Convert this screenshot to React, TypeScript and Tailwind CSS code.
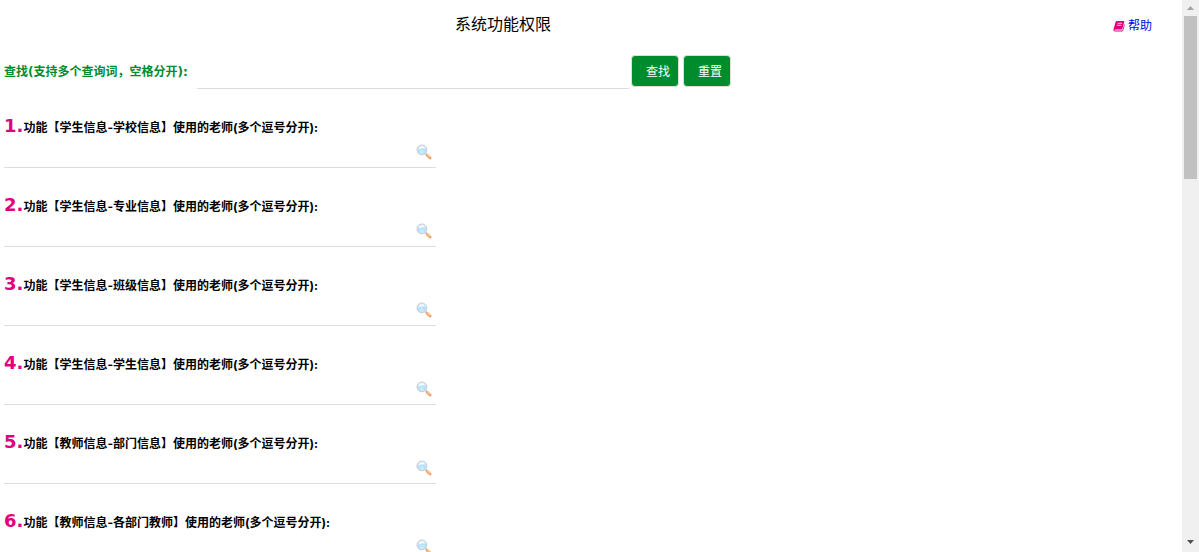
import React from "react";

const features = [
  "学生信息-学校信息",
  "学生信息-专业信息",
  "学生信息-班级信息",
  "学生信息-学生信息",
  "教师信息-部门信息",
  "教师信息-各部门教师",
];

function MagnifierIcon() {
  return (
    <svg width="16" height="16" viewBox="0 0 16 16" aria-hidden="true">
      <defs>
        <radialGradient id="lens" cx="0.5" cy="0.75" r="0.75">
          <stop offset="0" stopColor="#c9f0ff" />
          <stop offset="0.5" stopColor="#b6defa" />
          <stop offset="1" stopColor="#e9f5fd" />
        </radialGradient>
      </defs>
      <path d="M9.600 9.600l1.800 1.500" stroke="#b9b4b4" strokeWidth="1.600" />
      <path d="M11.200 11.200l2.900 2.700" stroke="#ea9a63" strokeWidth="2.800" strokeLinecap="round" />
      <path d="M11.300 10.900l2.500 2.200" stroke="#ffd79c" strokeWidth="1.200" strokeLinecap="round" />
      <circle cx="5.900" cy="5.900" r="4.900" fill="url(#lens)" stroke="#c9cbd0" strokeWidth="1" />
      <path d="M2.600 5.500a3.400 3.400 0 0 1 6.400-1.300c-2 0-4.400 0-6.400 1.300z" fill="#f6fbff" />
    </svg>
  );
}

function BookIcon() {
  return (
    <svg width="12" height="12" viewBox="0 0 12 12" aria-hidden="true">
      <path
        d="M4 1h6.600q.9 0 .7.800L9.400 8.600Q9.200 9.400 8.400 9.400H2.200q-.7 0-.7.500t.7.500h6.600q.5 0 .7-.5L11.300 4q.6.300.4 1L10.200 10.400q-.3 1-1.300 1H2.100Q.4 11.400.4 9.800L2.500 2.300Q2.900 1 4 1z"
        fill="#e0007f"
      />
      <path d="M4.600 3.300h4.400M4 5.300h4.400" stroke="#fff" strokeWidth="0.8" />
    </svg>
  );
}

interface FeatureFieldProps {
  index: number;
  name: string;
}

function FeatureField({ index, name }: FeatureFieldProps) {
  const id = `feature-${index}`;
  return (
    <div className="pt-[27px]">
      <label
        htmlFor={id}
        className="flex h-5 items-baseline font-['Inter','Noto_Sans_CJK_SC',sans-serif] text-xs leading-5 font-bold text-black"
      >
        <span className="font-['DejaVu_Sans',sans-serif] text-lg leading-5 text-[#e0007f]">{index}.</span>
        <span>功能【{name}】使用的老师(多个逗号分开):</span>
      </label>
      <div className="flex h-8 w-[432px] max-w-full border-b border-[#dddddd] pr-1">
        <input id={id} type="text" className="min-w-0 flex-1 bg-transparent text-xs outline-none" />
        <button type="button" aria-label="选择老师" className="h-8 w-4">
          <MagnifierIcon />
        </button>
      </div>
    </div>
  );
}

function ScrollRail() {
  return (
    <div className="flex w-[17px] shrink-0 flex-col items-center bg-[#f0f0f0]" aria-hidden="true">
      <svg width="17" height="16" viewBox="0 0 17 16">
        <path d="M5 10h7L8.500 6z" fill="#a3a3a3" />
      </svg>
      <div className="h-[163px] w-[13px] bg-[#c1c1c1]" />
      <svg width="17" height="17" viewBox="0 0 17 17" className="mt-auto">
        <path d="M5 5h7L8.500 9z" fill="#505050" />
      </svg>
    </div>
  );
}

export default function App() {
  return (
    <div
      lang="zh-CN"
      className="flex h-screen overflow-hidden bg-white font-['Open_Sans','Noto_Sans_CJK_SC',sans-serif] text-xs text-black"
    >
      <main className="min-w-0 flex-1 overflow-hidden px-1">
        <header className="flex h-[55px] items-start pt-3">
          <h1 className="w-[85%] text-center text-base leading-6">系统功能权限</h1>
          <div className="flex flex-1 justify-end pr-[26px]">
            <a href="#help" className="flex items-center gap-[3px] leading-7 text-[#0000ee]">
              <BookIcon />
              帮助
            </a>
          </div>
        </header>

        <form className="flex items-start" onSubmit={(e) => e.preventDefault()}>
          <label
            htmlFor="keyword"
            className="w-[193px] shrink-0 font-['DejaVu_Sans','Noto_Sans_CJK_SC',sans-serif] leading-[34px] font-bold text-[#008c2d]"
          >
            查找(支持多个查询词，空格分开):
          </label>
          <input id="keyword" type="text" className="h-[34px] w-[432px] min-w-0 border-b border-[#dddddd] outline-none" />
          <button type="submit" className="ml-0.5 h-8 w-12 shrink-0 rounded border border-[#dddddd] bg-[#008c2d] pt-0.5 pl-1.5 text-white">
            查找
          </button>
          <button type="reset" className="ml-1 h-8 w-12 shrink-0 rounded border border-[#dddddd] bg-[#008c2d] pt-0.5 pl-1.5 text-white">
            重置
          </button>
        </form>

        {features.map((name, i) => (
          <FeatureField key={name} index={i + 1} name={name} />
        ))}
      </main>
      <ScrollRail />
    </div>
  );
}
